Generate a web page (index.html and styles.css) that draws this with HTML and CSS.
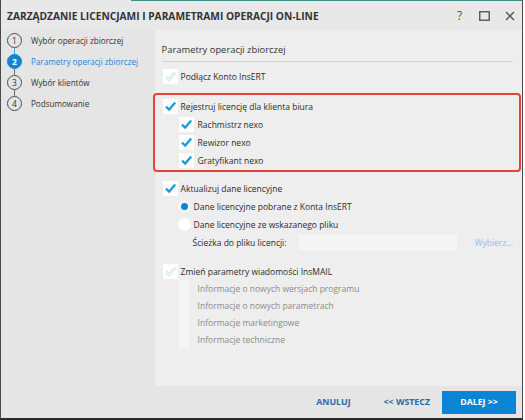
FILE: index.html
```html
<!DOCTYPE html>
<html lang="pl">
<head>
<meta charset="utf-8">
<title>Zarządzanie licencjami</title>
<link rel="stylesheet" href="styles.css">
</head>
<body>
<div class="window">
  <div class="topline"><span class="topline-accent"></span></div>
  <header class="titlebar">
    <span class="title">ZARZĄDZANIE LICENCJAMI I PARAMETRAMI OPERACJI ON-LINE</span>
    <div class="controls">
      <span class="ctrl ctrl-help">?</span>
      <span class="ctrl"><svg width="11" height="10" viewBox="0 0 11 10"><rect x="0.75" y="0.75" width="9.5" height="8.5" fill="none" stroke="#555" stroke-width="1.4"/></svg></span>
      <span class="ctrl"><svg width="10" height="10" viewBox="0 0 10 10"><path d="M1 1 L9 9 M9 1 L1 9" stroke="#555" stroke-width="1.4" fill="none"/></svg></span>
    </div>
  </header>
  <div class="main">
    <nav class="steps">
      <div class="step">
        <div class="marker"><span class="circle">1</span><span class="link link-blue"></span></div>
        <span class="step-label">Wybór operacji zbiorczej</span>
      </div>
      <div class="step step-active">
        <div class="marker"><span class="circle">2</span><span class="link"></span></div>
        <span class="step-label">Parametry operacji zbiorczej</span>
      </div>
      <div class="step">
        <div class="marker"><span class="circle">3</span><span class="link"></span></div>
        <span class="step-label">Wybór klientów</span>
      </div>
      <div class="step">
        <div class="marker"><span class="circle">4</span></div>
        <span class="step-label">Podsumowanie</span>
      </div>
    </nav>
    <section class="panel">
      <h2 class="panel-title">Parametry operacji zbiorczej</h2>

      <div class="row row-first">
        <span class="cb"><svg class="chk" viewBox="0 0 15 15"><path d="M3 7.6 L6.2 10.6 L12.2 3.6" fill="none" stroke="#bcdcf0" stroke-width="2.6"/><path d="M3 7.6 L6.2 10.6 L12.2 3.6" fill="none" stroke="#fff" stroke-width="1.1"/></svg></span>
        <span class="lbl">Podłącz Konto InsERT</span>
      </div>

      <div class="highlight">
        <div class="row">
          <span class="cb"><svg class="chk" viewBox="0 0 15 15"><path d="M3 7.6 L6.2 10.6 L12.2 3.6" fill="none" stroke="#1a9be0" stroke-width="2.3"/></svg></span>
          <span class="lbl">Rejestruj licencję dla klienta biura</span>
        </div>
        <div class="row row-sub">
          <span class="cb"><svg class="chk" viewBox="0 0 15 15"><path d="M3 7.6 L6.2 10.6 L12.2 3.6" fill="none" stroke="#1a9be0" stroke-width="2.3"/></svg></span>
          <span class="lbl">Rachmistrz nexo</span>
        </div>
        <div class="row row-sub">
          <span class="cb"><svg class="chk" viewBox="0 0 15 15"><path d="M3 7.6 L6.2 10.6 L12.2 3.6" fill="none" stroke="#1a9be0" stroke-width="2.3"/></svg></span>
          <span class="lbl">Rewizor nexo</span>
        </div>
        <div class="row row-sub">
          <span class="cb"><svg class="chk" viewBox="0 0 15 15"><path d="M3 7.6 L6.2 10.6 L12.2 3.6" fill="none" stroke="#1a9be0" stroke-width="2.3"/></svg></span>
          <span class="lbl">Gratyfikant nexo</span>
        </div>
      </div>

      <div class="row row-update">
        <span class="cb"><svg class="chk" viewBox="0 0 15 15"><path d="M3 7.6 L6.2 10.6 L12.2 3.6" fill="none" stroke="#1a9be0" stroke-width="2.3"/></svg></span>
        <span class="lbl">Aktualizuj dane licencyjne</span>
      </div>
      <div class="row row-radio">
        <span class="radio radio-on"><span class="dot"></span></span>
        <span class="lbl">Dane licencyjne pobrane z Konta InsERT</span>
      </div>
      <div class="row row-radio">
        <span class="radio"></span>
        <span class="lbl">Dane licencyjne ze wskazanego pliku</span>
      </div>
      <div class="row row-path">
        <span class="path-label">Ścieżka do pliku licencji:</span>
        <span class="path-input"></span>
        <span class="path-link">Wybierz...</span>
      </div>

      <div class="row row-mail">
        <span class="cb"><svg class="chk" viewBox="0 0 15 15"><path d="M3 7.6 L6.2 10.6 L12.2 3.6" fill="none" stroke="#bcdcf0" stroke-width="2.6"/><path d="M3 7.6 L6.2 10.6 L12.2 3.6" fill="none" stroke="#fff" stroke-width="1.1"/></svg></span>
        <span class="lbl">Zmień parametry wiadomości InsMAIL</span>
      </div>
      <div class="mail-group">
        <div class="mail-boxes"></div>
        <ul class="mail-list">
          <li>Informacje o nowych wersjach programu</li>
          <li>Informacje o nowych parametrach</li>
          <li>Informacje marketingowe</li>
          <li>Informacje techniczne</li>
        </ul>
      </div>
    </section>
  </div>
  <footer class="footer">
    <span class="btn-link btn-cancel">ANULUJ</span>
    <span class="btn-link btn-back">&lt;&lt; WSTECZ</span>
    <span class="btn-primary">DALEJ &gt;&gt;</span>
  </footer>
</div>
</body>
</html>
```

FILE: styles.css
```css
* { box-sizing: border-box; }

html, body {
  margin: 0;
  padding: 0;
  background: #ffffff;
}

body {
  font-family: "Open Sans", "Noto Sans", sans-serif;
  color: #333333;
}

.window {
  width: 523px;
  height: 420px;
  border-left: 1px solid #4a4a4a;
  border-right: 1px solid #4a4a4a;
  border-bottom: 2px solid #2a2a2a;
  background: #e5e5e5;
  display: flex;
  flex-direction: column;
}

.topline {
  height: 1px;
  display: flex;
  background: #e8e8e8;
}

.topline-accent {
  margin-left: 130px;
  flex: 1;
  background: #3d8c8c;
}

.titlebar {
  height: 29px;
  background: #e8e8e8;
  display: flex;
  align-items: center;
  padding-left: 6px;
}

.title {
  font-size: 10.2px;
  font-weight: 700;
  color: #333333;
  letter-spacing: 0;
  white-space: nowrap;
}

.controls {
  margin-left: auto;
  display: flex;
  height: 100%;
}

.ctrl {
  width: 25px;
  display: flex;
  align-items: center;
  justify-content: center;
}

.ctrl-help {
  font-size: 12px;
  color: #555555;
  font-weight: 400;
}

.main {
  flex: 1;
  display: flex;
  min-height: 0;
}

.steps {
  width: 157px;
  padding-top: 0;
  margin-top: -1px;
  display: flex;
  flex-direction: column;
}

.step {
  height: 21px;
  display: flex;
  align-items: flex-start;
  padding-left: 6px;
  margin-top: 0;
}

.step:first-child {
  margin-top: 4px;
}

.marker {
  width: 15px;
  height: 21px;
  display: flex;
  flex-direction: column;
  align-items: center;
  flex-shrink: 0;
}

.circle {
  width: 15px;
  height: 15px;
  border: 1px solid #4d4d4d;
  border-radius: 50%;
  font-size: 8.5px;
  line-height: 13px;
  text-align: center;
  color: #333333;
  background: #e5e5e5;
}

.link {
  width: 1px;
  flex: 1;
  background: #6a6a6a;
}

.link-blue {
  background: #5a9ccc;
}

.step-active .circle {
  background: #0f86d4;
  border-color: #0f86d4;
  color: #ffffff;
  font-weight: 700;
}

.step-label {
  margin-left: 9px;
  font-size: 8.1px;
  line-height: 15px;
  color: #333333;
  white-space: nowrap;
}

.step-active .step-label {
  color: #1a86d6;
}

.panel {
  flex: 1;
  background: #eeeeee;
  padding: 11px 9px 0 7px;
  display: flex;
  flex-direction: column;
  font-size: 8.5px;
}

.panel-title {
  margin: 0;
  font-size: 9.4px;
  font-weight: 400;
  line-height: 18px;
  padding-bottom: 2px;
  border-bottom: 1px solid #d3d3d3;
  color: #333333;
}

.row {
  height: 18px;
  display: flex;
  align-items: center;
  white-space: nowrap;
}

.row-first {
  margin-top: 5px;
  padding-left: 1px;
}

.cb {
  width: 15px;
  height: 15px;
  background: #ffffff;
  display: flex;
  flex-shrink: 0;
}

.chk {
  width: 15px;
  height: 15px;
}

.lbl {
  margin-left: 3px;
  color: #2b2b2b;
}

.highlight {
  margin: 8px -8px 0 -9px;
  border: 2px solid #e8403a;
  border-radius: 4px;
  padding: 2px 0 1px 8px;
}

.row-sub {
  padding-left: 16px;
}

.row-sub .lbl {
  margin-left: 4px;
}

.row-update {
  margin-top: 7px;
  padding-left: 1px;
}

.row-radio {
  padding-left: 16px;
}

.radio {
  width: 13px;
  height: 13px;
  border-radius: 50%;
  background: #ffffff;
  display: flex;
  align-items: center;
  justify-content: center;
  flex-shrink: 0;
}

.radio-on {
  background: #f6f6f6;
}

.dot {
  width: 7px;
  height: 7px;
  border-radius: 50%;
  background: #0f86d4;
}

.row-radio .lbl {
  margin-left: 3px;
}

.row-path {
  padding-left: 31px;
}

.path-label {
  width: 106px;
  color: #2b2b2b;
}

.path-input {
  width: 158px;
  height: 16px;
  background: #f5f5f5;
}

.path-link {
  margin-left: 18px;
  color: #93bde3;
}

.row-mail {
  margin-top: 11px;
  padding-left: 1px;
}

.row-mail .lbl {
  margin-left: 3px;
}

.mail-group {
  display: flex;
  padding-left: 16px;
}

.mail-boxes {
  width: 12px;
  background: #f4f4f4;
}

.mail-list {
  list-style: none;
  margin: 0;
  padding: 0 0 0 8px;
}

.mail-list li {
  height: 17px;
  line-height: 17px;
  color: #8c8c8c;
  white-space: nowrap;
}

.footer {
  height: 32px;
  display: flex;
  align-items: center;
  justify-content: flex-end;
  padding-right: 6px;
  background: #e5e5e5;
}

.btn-link {
  font-size: 8.8px;
  font-weight: 700;
  color: #2d6aa6;
}

.btn-cancel {
  margin-right: 33px;
}

.btn-back {
  margin-right: 12px;
}

.btn-primary {
  width: 74px;
  height: 23px;
  background: #0b84d8;
  color: #ffffff;
  font-size: 8.8px;
  font-weight: 700;
  display: flex;
  align-items: center;
  justify-content: center;
}
```
